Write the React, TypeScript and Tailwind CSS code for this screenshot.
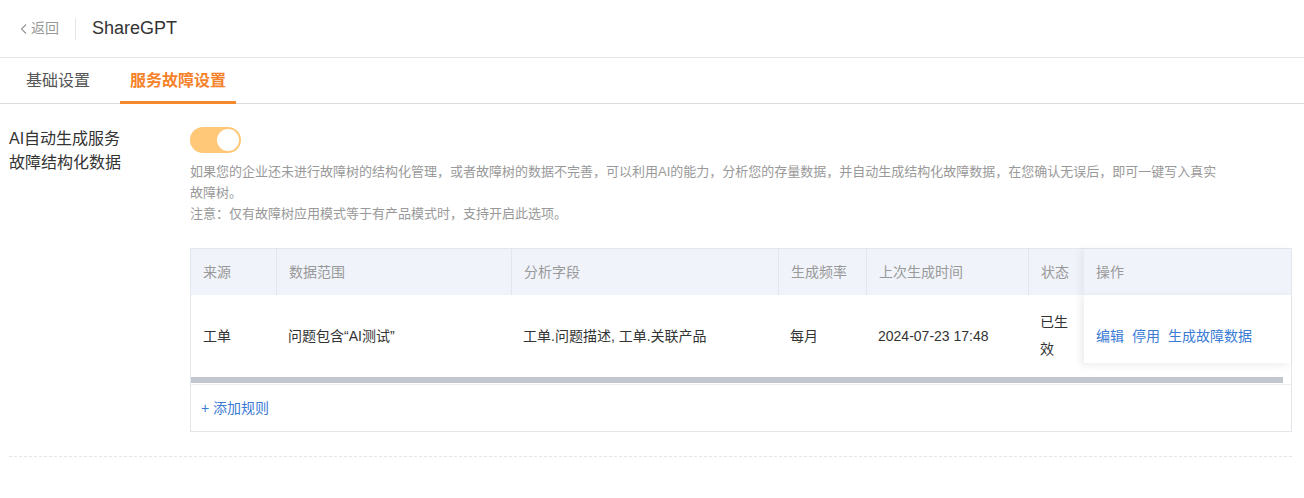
import React from 'react';

const columns = [
  { key: 'source', title: '来源', width: 'w-[85px]' },
  { key: 'range', title: '数据范围', width: 'w-[235px]' },
  { key: 'fields', title: '分析字段', width: 'w-[267px]' },
  { key: 'freq', title: '生成频率', width: 'w-[88px]' },
  { key: 'last', title: '上次生成时间', width: 'w-[162px]' },
  { key: 'status', title: '状态', width: 'w-[56px]' },
];

const row: Record<string, string> = {
  source: '工单',
  range: '问题包含“AI测试”',
  fields: '工单.问题描述, 工单.关联产品',
  freq: '每月',
  last: '2024-07-23 17:48',
  status: '已生效',
};

export default function App() {
  return (
    <div
      className="w-[1304px] h-[498px] bg-white text-[#333]"
      style={{ fontFamily: '"Liberation Sans", "Noto Sans CJK SC", sans-serif' }}
    >
      {/* Header */}
      <div className="flex items-center h-[58px] border-b border-[#e8e8e8] pl-[19px]">
        <button className="flex items-center gap-[2px] text-[14px] text-[#999]">
          <svg width="10" height="12" viewBox="0 0 10 12" fill="none">
            <path d="M7 1.5L2.5 6L7 10.5" stroke="#999" strokeWidth="1.2" />
          </svg>
          返回
        </button>
        <div className="w-px h-[22px] bg-[#e5e5e5] mx-[16px]" />
        <span className="text-[18px] text-[#333]">ShareGPT</span>
      </div>

      {/* Tabs */}
      <div className="flex h-[46px] border-b border-[#dcdcdc] pl-[16px]">
        <div className="flex items-center px-[10px] text-[16px] text-[#555]">基础设置</div>
        <div className="flex items-center ml-[20px] px-[10px] text-[16px] font-bold text-[#f5822a] border-b-[3px] border-[#f5882a] -mb-px pt-[3px]">
          服务故障设置
        </div>
      </div>

      {/* Content */}
      <div className="px-[9px] pt-[23px]">
        <div className="flex">
          <div className="w-[181px] text-[16px] leading-[24px] text-[#333]">
            AI自动生成服务
            <br />
            故障结构化数据
          </div>
          <div className="w-[1102px]">
            <div className="flex items-center justify-end w-[51px] h-[26px] rounded-full bg-[#ffc878] pr-[2px]">
              <div className="w-[22px] h-[22px] rounded-full bg-white" />
            </div>
            <p className="mt-[8px] w-[1030px] text-[13px] leading-[21px] text-[#999]">
              如果您的企业还未进行故障树的结构化管理，或者故障树的数据不完善，可以利用AI的能力，分析您的存量数据，并自动生成结构化故障数据，在您确认无误后，即可一键写入真实故障树。
            </p>
            <p className="text-[13px] leading-[21px] text-[#999]">注意：仅有故障树应用模式等于有产品模式时，支持开启此选项。</p>

            {/* Table */}
            <div className="mt-[24px] border border-[#e3e6eb] text-[14px]">
              <div className="flex h-[46px] bg-[#f0f3fa] text-[#999]">
                {columns.map((c, i) => (
                  <div
                    key={c.key}
                    className={`${c.width} flex items-center px-[12px] ${i > 0 ? 'border-l border-[#e2e6ee]' : ''}`}
                  >
                    {c.title}
                  </div>
                ))}
                <div className="w-[207px] flex items-center px-[12px] shadow-[-4px_0_8px_rgba(0,0,0,0.05)]">
                  操作
                </div>
              </div>
              <div className="flex h-[82px] text-[#333]">
                {columns.map((c) => (
                  <div key={c.key} className={`${c.width} flex items-center px-[12px] leading-[27px]`}>
                    {row[c.key]}
                  </div>
                ))}
                <div className="w-[207px] h-[68px] flex items-center gap-[8px] px-[12px] pt-[14px] bg-white shadow-[-3px_2px_8px_rgba(0,0,0,0.08)] text-[#3a7bd5]">
                  <span>编辑</span>
                  <span>停用</span>
                  <span>生成故障数据</span>
                </div>
              </div>
              <div className="h-[8px] pr-[8px] border-b border-[#eceef2]">
                <div className="h-[6px] bg-[#c2c6ce]" />
              </div>
              <div className="flex items-center h-[46px] px-[10px] text-[#3a7bd5]">+ 添加规则</div>
            </div>
          </div>
        </div>
        <div className="mt-[24px] w-[1283px] border-t border-dashed border-[#e5e5e5]" />
      </div>
    </div>
  );
}
